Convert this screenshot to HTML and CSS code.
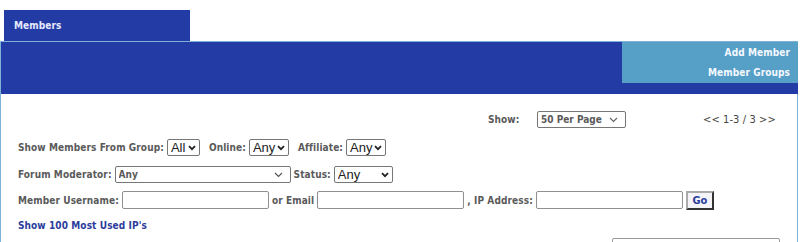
FILE: index.html
```html
<!DOCTYPE html>
<html>

<head>
    <meta name="viewport" content="width=device-width, initial-scale=1.0">
    <title>Members</title>
    <link rel="stylesheet" href="styles.css">
</head>

<body>
    <div class="tabs">
        <div class="tab">Members</div>
    </div>

    <div class="header">
        <div class="side-menu">
            <a href="#">Add Member</a>
            <a href="#">Member Groups</a>
        </div>
    </div>

    <div class="content">
        <div class="paging">
            <label class="show-label">Show:</label>
            <span class="select-box per-page">
                <select><option>50 Per Page</option></select>
                <svg class="chevron thin" width="9" height="6" viewBox="0 0 9 6"><path d="M1 1 L4.5 4.5 L8 1" fill="none" stroke="#666" stroke-width="1.2"/></svg>
            </span>
            <span class="pages">&lt;&lt; 1-3 / 3 &gt;&gt;</span>
        </div>

        <div class="filter-row first">
            <label>Show Members From Group:</label>
            <span class="select-box plain sel-all">
                <select><option>All</option></select>
                <svg class="chevron" width="8" height="6" viewBox="0 0 8 6"><path d="M1 1.2 L4 4.2 L7 1.2" fill="none" stroke="#222" stroke-width="1.8"/></svg>
            </span>
            <label class="gap">Online:</label>
            <span class="select-box plain sel-any">
                <select><option>Any</option></select>
                <svg class="chevron" width="8" height="6" viewBox="0 0 8 6"><path d="M1 1.2 L4 4.2 L7 1.2" fill="none" stroke="#222" stroke-width="1.8"/></svg>
            </span>
            <label class="gap">Affiliate:</label>
            <span class="select-box plain sel-any">
                <select><option>Any</option></select>
                <svg class="chevron" width="8" height="6" viewBox="0 0 8 6"><path d="M1 1.2 L4 4.2 L7 1.2" fill="none" stroke="#222" stroke-width="1.8"/></svg>
            </span>
        </div>

        <div class="filter-row">
            <label>Forum Moderator:</label>
            <span class="select-box moderator">
                <select><option>Any</option></select>
                <svg class="chevron thin" width="9" height="6" viewBox="0 0 9 6"><path d="M1 1 L4.5 4.5 L8 1" fill="none" stroke="#555" stroke-width="1.2"/></svg>
            </span>
            <label>Status:</label>
            <span class="select-box plain sel-status">
                <select><option>Any</option></select>
                <svg class="chevron" width="8" height="6" viewBox="0 0 8 6"><path d="M1 1.2 L4 4.2 L7 1.2" fill="none" stroke="#222" stroke-width="1.8"/></svg>
            </span>
        </div>

        <div class="filter-row">
            <label>Member Username:</label>
            <input type="text" class="text-field">
            <label>or Email</label>
            <input type="text" class="text-field">
            <label>, IP Address:</label>
            <input type="text" class="text-field">
            <button class="go-button">Go</button>
        </div>

        <a href="#" class="ip-link">Show 100 Most Used IP's</a>

        <div class="bottom-row">
            <div class="bottom-box"></div>
        </div>
    </div>
</body>

</html>
```

FILE: styles.css
```css
:root {
    --dark-blue: #233ca5;
    --light-blue: #569fc7;
    --edge-blue: #7eb2d6;
    --label-color: #5a5a5a;
    --link-color: #2b3c9c;
}

body {
    margin: 0;
    width: 800px;
    height: 242px;
    overflow: hidden;
    font-family: "DejaVu Sans Condensed", "DejaVu Sans", sans-serif;
    font-size: 10px;
    font-weight: bold;
    letter-spacing: 0.1px;
    background: #fff;
}

.tabs {
    display: flex;
    padding: 10px 0 0 4px;
}

.tab {
    width: 176px;
    height: 31px;
    padding-left: 10px;
    line-height: 31px;
    background: var(--dark-blue);
    color: #e6e9ff;
}

.header {
    display: flex;
    justify-content: flex-end;
    width: 797px;
    height: 52px;
    border-top: 1px solid var(--edge-blue);
    border-left: 1px solid var(--edge-blue);
    background: var(--dark-blue);
}

.side-menu {
    display: flex;
    flex-direction: column;
    align-items: flex-end;
    justify-content: space-around;
    width: 168px;
    height: 41px;
    padding-right: 8px;
    background: var(--light-blue);
}

.side-menu a {
    color: #f4f8ff;
    text-decoration: none;
}

.content {
    width: 798px;
    height: 148px;
    overflow: hidden;
    border-left: 1px solid var(--edge-blue);
    border-right: 1px solid var(--edge-blue);
    padding: 0 0 0 17px;
    box-sizing: border-box;
    color: var(--label-color);
}

.paging {
    display: flex;
    align-items: center;
    height: 16px;
    margin: 17px 0 7px;
    padding-left: 470px;
}

.show-label {
    width: 49px;
}

.pages {
    margin-left: 77px;
    font-size: 11px;
    font-weight: normal;
    color: #444;
}

.filter-row {
    display: flex;
    align-items: center;
    gap: 3px;
    height: 26px;
}

.filter-row.first {
    height: 27px;
}

.gap {
    margin-left: 6px;
}

.select-box {
    position: relative;
    display: inline-flex;
    height: 17px;
    border: 1px solid #767676;
    border-radius: 2px;
    box-sizing: border-box;
    background: #fff;
}

.select-box select {
    appearance: none;
    width: 100%;
    height: 100%;
    margin: 0;
    padding: 0 0 0 3px;
    border: none;
    background: transparent;
    font: inherit;
    color: inherit;
}

.chevron {
    position: absolute;
    right: 3px;
    top: 5px;
}

.chevron.thin {
    right: 7px;
}

.plain {
    font-family: "Liberation Sans", Arial, sans-serif;
    font-size: 13px;
    font-weight: normal;
    letter-spacing: 0;
    color: #222;
}

.plain select {
    padding-left: 3px;
}

.per-page {
    width: 89px;
    color: var(--label-color);
}

.sel-all {
    width: 33px;
}

.sel-any {
    width: 40px;
}

.sel-status {
    width: 59px;
}

.moderator {
    width: 176px;
    color: var(--label-color);
}

.text-field {
    width: 147px;
    height: 18px;
    padding: 0;
    border: 1px solid #8f8f8f;
    border-radius: 2px;
    box-sizing: border-box;
}

.go-button {
    width: 28px;
    height: 19px;
    padding: 0;
    border: 2px solid #333;
    border-top-color: #aaa;
    border-left-color: #aaa;
    background: #f4f4f8;
    color: var(--link-color);
    font-family: inherit;
    font-size: 11px;
    font-weight: bold;
}

.ip-link {
    display: block;
    margin-top: 6px;
    line-height: 13px;
    color: var(--link-color);
    text-decoration: none;
}

.bottom-row {
    display: flex;
    justify-content: flex-end;
    padding-right: 17px;
    margin-top: 6px;
}

.bottom-box {
    width: 166px;
    height: 10px;
    border: 1px solid #999;
    border-radius: 2px;
}
```
